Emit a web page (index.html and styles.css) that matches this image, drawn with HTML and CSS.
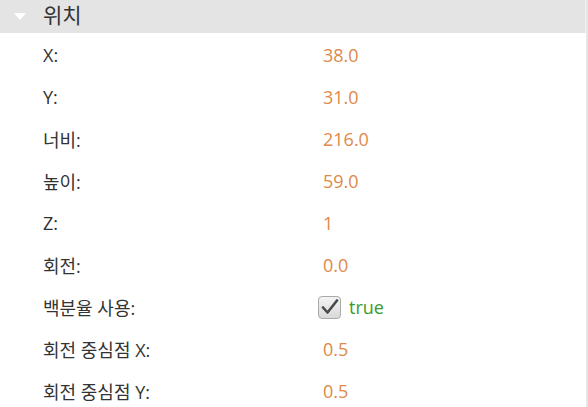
FILE: index.html
```html
<!DOCTYPE html>
<html lang="ko">
<head>
<meta charset="utf-8">
<link rel="stylesheet" href="styles.css">
</head>
<body>
<div class="panel">
  <div class="header">
    <svg class="tri" width="14" height="9" viewBox="0 0 14 9"><polygon points="1,1 13,1 7,8" fill="#ffffff"/></svg>
    <span class="title">위치</span>
  </div>
  <div class="rows">
    <div class="row"><span class="label">X:</span><span class="val">38.0</span></div>
    <div class="row"><span class="label">Y:</span><span class="val">31.0</span></div>
    <div class="row"><span class="label">너비:</span><span class="val">216.0</span></div>
    <div class="row"><span class="label">높이:</span><span class="val">59.0</span></div>
    <div class="row"><span class="label">Z:</span><span class="val">1</span></div>
    <div class="row"><span class="label">회전:</span><span class="val">0.0</span></div>
    <div class="row"><span class="label">백분율 사용:</span><span class="val bool"><span class="cb"><svg width="18" height="16" viewBox="0 0 18 16"><path d="M2 8.5 L6.5 13.5 L16 1.5" fill="none" stroke="#4a4a4a" stroke-width="2.6" stroke-linecap="round" stroke-linejoin="round"/></svg></span><span class="true">true</span></span></div>
    <div class="row"><span class="label">회전 중심점 X:</span><span class="val">0.5</span></div>
    <div class="row"><span class="label">회전 중심점 Y:</span><span class="val">0.5</span></div>
  </div>
</div>
</body>
</html>
```
FILE: styles.css
```css
html, body {
  margin: 0;
  padding: 0;
  background: #ffffff;
}
body {
  font-family: "Open Sans", "Noto Sans CJK KR", sans-serif;
  width: 588px;
  height: 407px;
  overflow: hidden;
}
.panel {
  width: 586px;
  height: 407px;
  border-right: 2px solid #e6e6e6;
}
.header {
  height: 33px;
  background: #e4e4e4;
  display: flex;
  align-items: center;
  border-right: 1px solid #f2f2f2;
}
.tri {
  margin-left: 13px;
  margin-right: 16px;
}
.title {
  font-size: 21px;
  color: #333333;
  line-height: 1;
  position: relative;
  top: -1px;
}
.rows {
  display: flex;
  flex-direction: column;
  padding-top: 1px;
}
.row {
  height: 42px;
  display: flex;
  align-items: center;
  font-size: 18px;
  color: #333333;
}
.label {
  width: 280px;
  padding-left: 43px;
}
.val {
  color: #e0894a;
}
.bool {
  display: flex;
  align-items: center;
}
.cb {
  width: 21px;
  height: 21px;
  border: 1px solid #a9a9a9;
  border-radius: 4px;
  background: linear-gradient(#f4f4f4, #d9d9d9);
  display: flex;
  align-items: center;
  justify-content: center;
  margin-left: -5px;
  margin-right: 8px;
}
.true {
  color: #3c9a2c;
}
```
